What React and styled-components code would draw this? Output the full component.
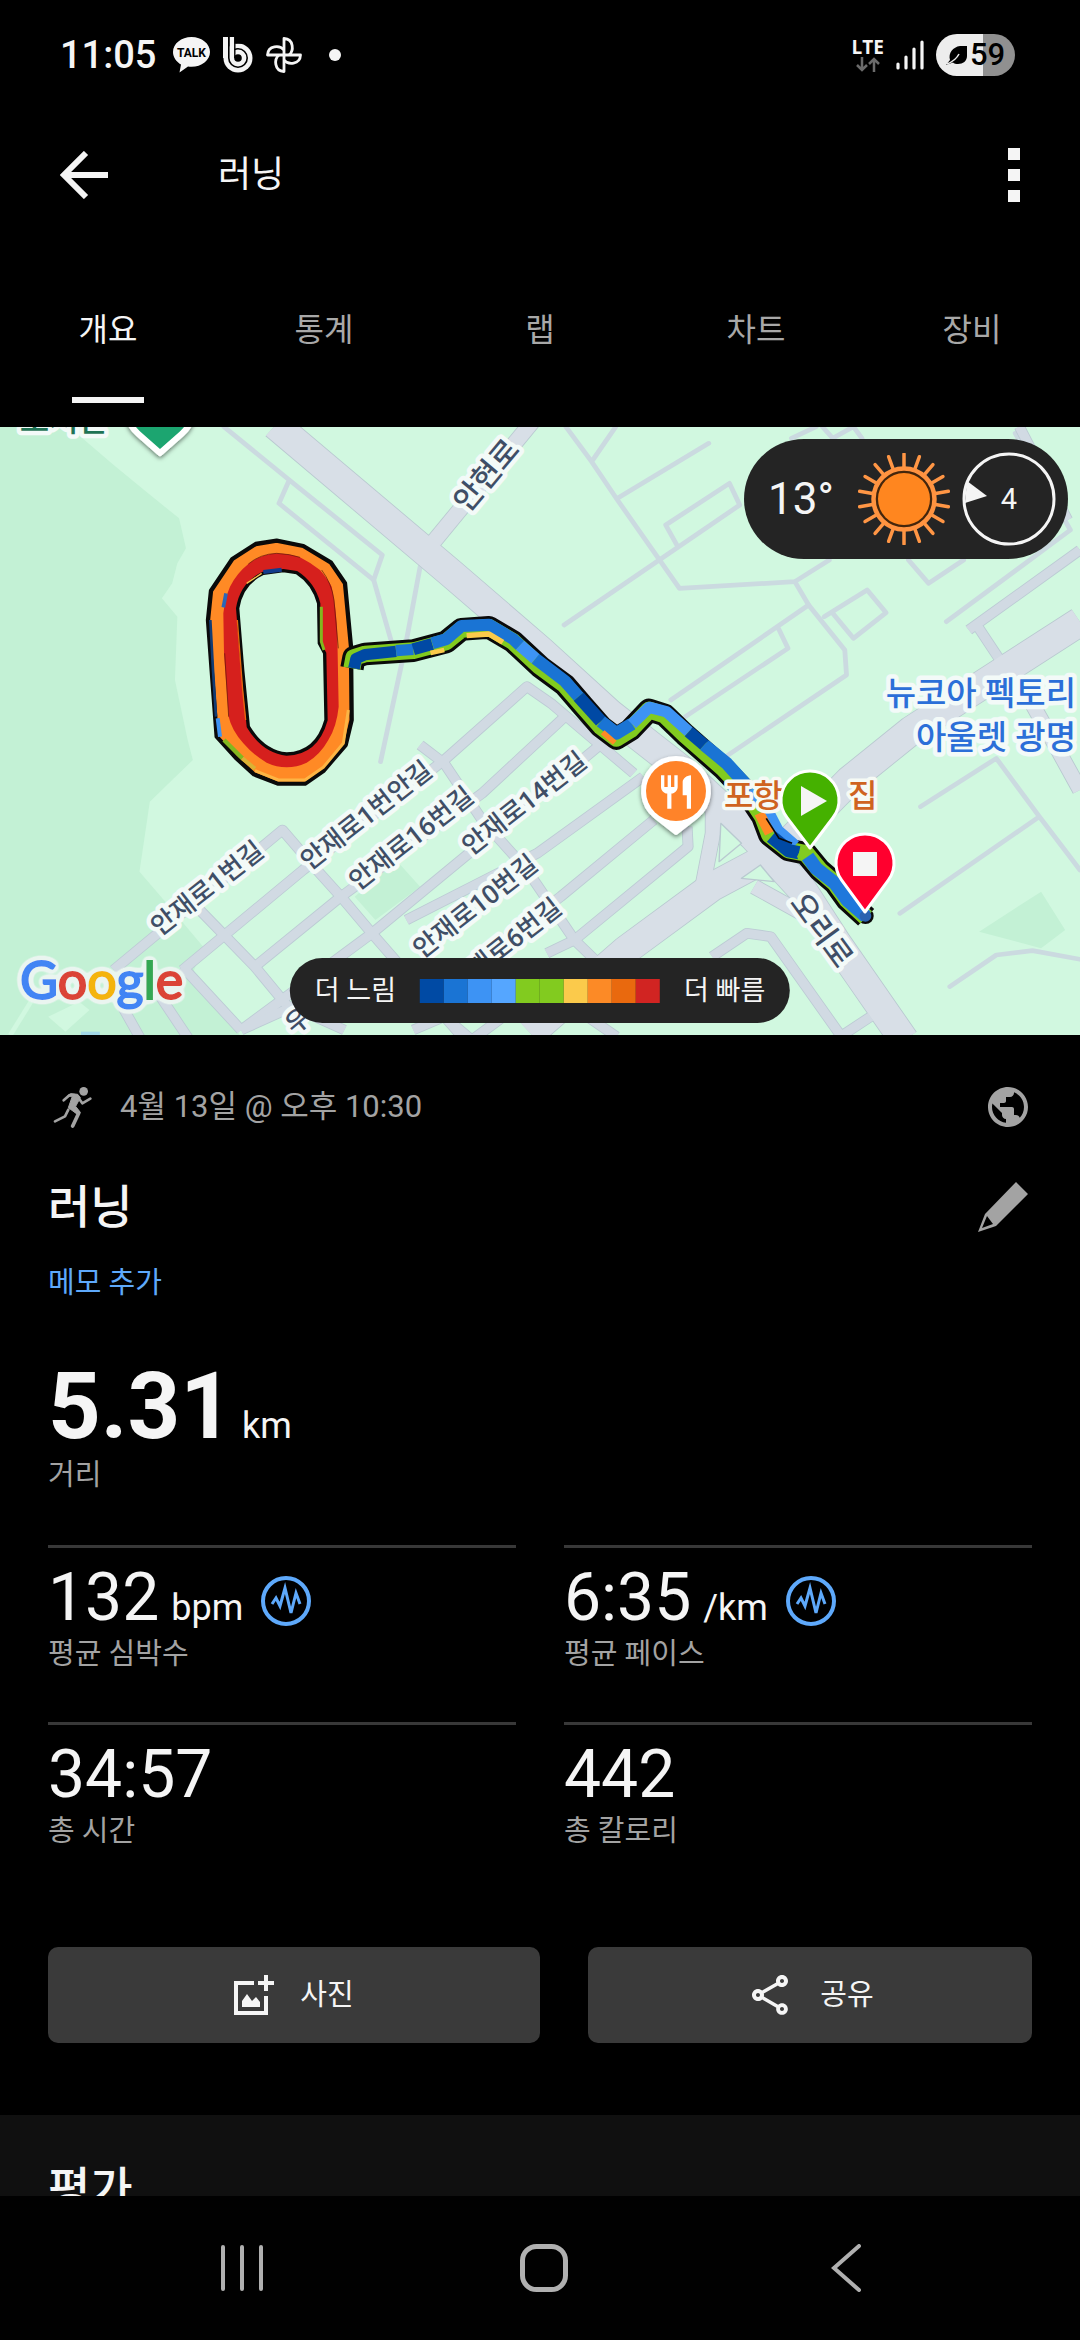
import React from "react";
import styled, { createGlobalStyle } from "styled-components";
import { MdOutlineShare, MdPublic, MdRestaurant } from "react-icons/md";

const GlobalStyle = createGlobalStyle`
  * { box-sizing: border-box; }
  body {
    margin: 0;
    background: #000;
    color: #f5f5f5;
    font-family: Roboto, "Noto Sans CJK KR", sans-serif;
  }
  button {
    border: 0;
    padding: 0;
    background: none;
    color: inherit;
    font: inherit;
    cursor: pointer;
  }
  svg { display: block; }
`;

/* ---------- layout ---------- */

const Screen = styled.div`
  display: flex;
  flex-direction: column;
  height: 100vh;
  overflow: hidden;
`;

const Scroller = styled.main`
  flex: 1;
  min-height: 0;
  overflow: hidden;
`;

/* ---------- status bar ---------- */

const StatusBar = styled.div`
  display: flex;
  justify-content: space-between;
  align-items: center;
  height: 110px;
  padding: 0 65px 0 60px;
`;

const StatusGroup = styled.div`
  display: flex;
  align-items: center;
  gap: ${(p) => p.$gap}px;
`;

const Clock = styled.span`
  font-size: 38px;
  font-weight: 500;
  line-height: 40px;
  margin-right: 4px;
`;

const Dot = styled.span`
  width: 12px;
  height: 12px;
  margin-left: 14px;
  border-radius: 50%;
  background: #f5f5f5;
`;

const Network = styled.div`
  display: flex;
  flex-direction: column;
  align-items: center;
  gap: 2px;
  font-family: "Open Sans", sans-serif;
  font-size: 19px;
  font-weight: 700;
  line-height: 16px;
`;

const Battery = styled.div`
  display: flex;
  align-items: center;
  justify-content: center;
  gap: 3px;
  width: 79px;
  height: 42px;
  border-radius: 21px;
  background: linear-gradient(90deg, #ededed 59%, #909090 59%);
  color: #000;
  font-size: 31px;
  font-weight: 500;
  line-height: 42px;
`;

/* ---------- app bar and tabs ---------- */

const AppBar = styled.header`
  display: flex;
  align-items: center;
  height: 130px;
  padding: 0 60px;
`;

const AppTitle = styled.h1`
  flex: 1;
  margin: 0 0 0 110px;
  font-size: 36px;
  font-weight: 400;
  line-height: 48px;
`;

const Tabs = styled.nav`
  display: grid;
  grid-template-columns: repeat(5, 1fr);
`;

const Tab = styled.button`
  display: flex;
  flex-direction: column;
  align-items: center;
  gap: 47px;
  padding: 70px 0 24px;
  font-size: 32px;
  line-height: 40px;
  color: ${(p) => (p.$active ? "#f5f5f5" : "#a8a8a8")};

  &::after {
    content: "";
    width: 72px;
    height: 6px;
    background: ${(p) => (p.$active ? "#f5f5f5" : "transparent")};
  }
`;

/* ---------- map ---------- */

const MapPanel = styled.section`
  position: relative;
  height: 608px;
  background: #d1f8e0;
  overflow: hidden;
`;

const MapCanvas = styled.svg`
  width: 100%;
  height: 100%;
  font-family: Roboto, "Noto Sans CJK KR", sans-serif;
`;

const Weather = styled.div`
  position: absolute;
  top: 12px;
  right: 12px;
  display: flex;
  align-items: center;
  height: 120px;
  padding: 0 12px 0 24px;
  border-radius: 60px;
  background: #242424;
`;

const Temperature = styled.span`
  margin-right: 24px;
  font-size: 44px;
  line-height: 48px;
`;

const Wind = styled.div`
  display: grid;
  place-items: center;
  margin-left: 12px;
  font-size: 29px;
  line-height: 32px;

  > * { grid-area: 1 / 1; }
`;

const Legend = styled.div`
  position: absolute;
  bottom: 12px;
  left: 50%;
  transform: translateX(-50%);
  display: flex;
  align-items: center;
  gap: 24px;
  height: 65px;
  padding: 0 25px;
  border-radius: 33px;
  background: #242424;
  font-size: 27px;
  line-height: 32px;
  white-space: nowrap;
`;

const Scale = styled.div`
  display: flex;
`;

const Swatch = styled.span`
  width: 24px;
  height: 24px;
  background: ${(p) => p.$color};
`;

/* ---------- activity details ---------- */

const Details = styled.section`
  padding: 48px 48px 72px;
`;

const Row = styled.div`
  display: flex;
  justify-content: space-between;
  align-items: center;
`;

const When = styled.div`
  display: flex;
  align-items: center;
  gap: 28px;
  height: 48px;
  padding-left: 5px;
  color: #a3a3a3;
  font-size: 31px;
  line-height: 40px;
`;

const IconButton = styled.button`
  color: ${(p) => p.$color || "#f5f5f5"};
`;

const Heading = styled.h2`
  margin: 0;
  font-size: 46px;
  font-weight: 500;
  line-height: 56px;
`;

const TitleRow = styled(Row)`
  margin-top: 48px;
  padding-right: 4px;
`;

const NoteLink = styled.a`
  display: block;
  width: fit-content;
  margin-top: 28px;
  color: #5ea9fb;
  font-size: 29px;
  line-height: 40px;
  text-decoration: none;
`;

const Label = styled.dt`
  color: #a3a3a3;
  font-size: 29px;
  line-height: 40px;
`;

const Value = styled.dd`
  display: flex;
  align-items: baseline;
  gap: ${(p) => (p.$large ? 9 : 12)}px;
  height: ${(p) => (p.$large ? 96 : 72)}px;
  margin: 0;
  font-size: ${(p) => (p.$large ? 92 : 66)}px;
  font-weight: ${(p) => (p.$large ? 700 : 400)};
  line-height: ${(p) => (p.$large ? 96 : 72)}px;
`;

const Unit = styled.span`
  font-size: 36px;
  font-weight: 400;
  line-height: 40px;
`;

const Stat = styled.dl`
  display: flex;
  flex-direction: column-reverse;
  margin: 0;
`;

const Distance = styled(Stat)`
  margin-top: 56px;
`;

const StatGrid = styled.div`
  display: grid;
  grid-template-columns: 1fr 1fr;
  gap: 48px;
  margin-top: 50px;

  ${Stat} {
    padding-top: 14px;
    border-top: 3px solid #383838;
  }
`;

const PulseButton = styled.button`
  align-self: center;
  margin: 6px 0 0 6px;
`;

const Actions = styled.div`
  display: grid;
  grid-template-columns: 492fr 444fr;
  gap: 48px;
  margin-top: 96px;
`;

const Action = styled.button`
  display: flex;
  align-items: center;
  justify-content: center;
  gap: 26px;
  height: 96px;
  border-radius: 10px;
  background: #3a3a3a;
  font-size: 29px;
  line-height: 40px;
`;

const Rating = styled.section`
  padding: 46px 48px;
  background: #101010;
`;

const SystemNav = styled.nav`
  display: grid;
  grid-template-columns: repeat(3, 1fr);
  align-items: center;
  height: 144px;
  padding: 0 83px 0 91px;
  background: #010101;
  color: #b0b0b0;

  button {
    display: grid;
    place-items: center;
  }
`;

/* ---------- icons ---------- */

const TalkIcon = () => (
  <svg width="37" height="36" viewBox="0 0 37 36">
    <path d="M18.500 0C8.300 0 0 6.700 0 15c0 5.300 3.300 9.700 8 12.500L6.500 35.500l8.500-6c1.200.2 2.300.3 3.500.3C28.700 29.800 37 23.300 37 15S28.700 0 18.500 0z" fill="#f5f5f5" />
    <text x="18.500" y="20" textAnchor="middle" fontSize="12" fontWeight="700" fill="#000">TALK</text>
  </svg>
);

const BIcon = () => (
  <svg width="30" height="36" viewBox="0 0 30 36">
    <path d="M0 0h5v20H0zM6.500 0h5v12h-5z" fill="#f5f5f5" />
    <circle cx="15" cy="21" r="14.500" fill="#f5f5f5" />
    <path d="M0 8h5v13H0z" fill="#f5f5f5" />
    <path d="M5.800 0v21a9.200 9.200 0 1 0 9.200-9.200c-1.500 0-2.500.3-3.500.8" fill="none" stroke="#000" strokeWidth="1.600" />
    <path d="M11.800 0v21" stroke="#000" strokeWidth="1.400" />
    <circle cx="15" cy="21" r="3.800" fill="#000" />
    <path d="M12.500 0H20v6.600h-7.500z" fill="#000" />
  </svg>
);

const PinwheelIcon = () => (
  <svg width="36" height="36" viewBox="-18 -18 36 36" fill="none" stroke="#f5f5f5" strokeWidth="2.800" strokeLinejoin="round">
    {[0, 90, 180, 270].map((a) => (
      <path key={a} transform={`rotate(${a})`} d="M0 0V-16.500C10-16 10-4 5 0" />
    ))}
  </svg>
);

const DataIcon = () => (
  <svg width="26" height="15" viewBox="0 0 26 15" fill="none" stroke="#6b6b6b" strokeWidth="2.500">
    <path d="M7 0v13M2 8l5 5 5-5M19 15V2M14 7l5-5 5 5" />
  </svg>
);

const SignalIcon = () => (
  <svg width="28" height="30" viewBox="0 0 28 30" stroke="#f5f5f5" strokeWidth="3.200" strokeLinecap="round">
    <path d="M2 24v4M10 17v11M18 9v19M26 2v26" />
  </svg>
);

const LeafIcon = () => (
  <svg width="21" height="21" viewBox="0 0 21 21">
    <path d="M21 1v10c0 5-4 8-9 8-2 0-4-.5-5-1.500L0 20l4-5C2 8 7 2 14 1z" fill="#000" />
    <path d="M1 19C6 17 11 13 13 9" stroke="#ededed" strokeWidth="1.500" fill="none" />
  </svg>
);

const BackArrow = () => (
  <svg width="48" height="48" viewBox="0 0 48 48" fill="none" stroke="currentColor" strokeWidth="6">
    <path d="M48 24H5M26 2L4 24l22 22" />
  </svg>
);

const MoreIcon = () => (
  <svg width="12" height="54" viewBox="0 0 12 54" fill="currentColor">
    <path d="M0 0h12v12H0zM0 21h12v12H0zM0 42h12v12H0z" />
  </svg>
);

const SunIcon = () => (
  <svg width="92" height="92" viewBox="-46 -46 92 92">
    {Array.from({ length: 18 }, (_, i) => (
      <path key={i} transform={`rotate(${i * 20})`} d="M0-32V-45" stroke="#ff9645" strokeWidth="3.500" strokeLinecap="round" />
    ))}
    <circle r="30.500" fill="#44260c" stroke="#ff9340" strokeWidth="4.500" />
    <circle r="26" fill="#ff861f" />
  </svg>
);

const WindDial = () => (
  <svg width="94" height="94" viewBox="-47 -47 94 94">
    <circle r="45" fill="none" stroke="#f5f5f5" strokeWidth="3" />
    <path d="M-42-18L-22-3l-22 7z" fill="#f5f5f5" />
  </svg>
);

const RunnerIcon = () => (
  <svg width="39" height="42" viewBox="40 33 117 126" fill="none" stroke="currentColor" strokeLinejoin="round" strokeLinecap="round">
    <circle cx="132" cy="49" r="13" fill="currentColor" stroke="none" />
    <path d="M94 56l20 2 8 10-14 26 14 18-6 8-30-22 12-34-14 0z" fill="currentColor" strokeWidth="3" />
    <path d="M72 76l18-16h14" strokeWidth="8" />
    <path d="M116 68l12 17 24-14" strokeWidth="8" />
    <path d="M98 98l19 17-18 38" strokeWidth="11" />
    <path d="M86 104l-10 20-30 15" strokeWidth="8" />
  </svg>
);

const PencilIcon = () => (
  <svg width="50" height="50" viewBox="0 0 50 50" fill="currentColor">
    <path fillRule="evenodd" d="M38 0l12 12-32 32L0 50l7-18zM9 34L4 46l11-4z" />
  </svg>
);

const PulseIcon = () => (
  <svg width="50" height="50" viewBox="-25 -25 50 50" fill="none" stroke="#5ea9fb">
    <circle r="23" strokeWidth="4" />
    <path d="M-14 3l4-6 4 8 5-18 6 25 5-20 4 11" strokeWidth="3" />
  </svg>
);

const AddPhotoIcon = () => (
  <svg width="40" height="40" viewBox="0 0 40 40">
    <path d="M20 8H2v30h30V21M32 0v16M24 8h16" fill="none" stroke="currentColor" strokeWidth="4" />
    <path d="M8 32V26l5-7 5 7 4-4 4 5v5z" fill="currentColor" />
  </svg>
);

/* ---------- map drawing ---------- */

const MINOR = [
  "M650 20L840 180L1110 405L1085 480L810 250L840 180",
  "M1085 480L1135 660M1220 440L1175 690L1105 1025",
  "M1643 20L1718 125L1793 240L1973 505L2308 485L2408 420M1788 20L1718 125M2058 70L1793 235",
  "M1968 380L1933 315L2118 190L2148 255L1638 615",
  "M2308 485L2348 555L2453 690L2458 765L2100 1015",
  "M2348 555L1948 840M2258 620L2288 685L1990 890",
  "M2393 590L2518 510L2573 578L2478 655L2418 580",
  "M2638 420L2696 490L2798 420M2298 55L2370 20M2388 20L2418 55L2478 20L2503 55",
  "M2673 1160L2893 1015L3018 1190L3136 1350M3018 1190L2613 1480",
  "M2758 1700L2893 1605L2998 1592L3136 1618M2748 605L3108 330L2948 40",
];

const STREETS = [
  "M330 1650L820 1230L920 1350L990 1430L1080 1540L1350 1860",
  "M1220 975L1290 1030L1400 1200L1530 1350L1668 1560L1728 1620",
  "M530 1650L880 1350L1290 1020L1530 800L1600 850L1760 990L1840 1060",
  "M740 1640L990 1430L1400 1120L1640 890",
  "M700 1830L1080 1540L1350 1310L1748 970",
  "M580 1470L740 1640L860 1790M350 1750L410 1860M440 1690L550 1860M530 1640L700 1830",
  "M1180 1500L1560 1300L1868 1070M1360 1640L1628 1430L1898 1200",
  "M1588 1600L1668 1560L1998 1280L1995 1220M700 1830L850 1760L1000 1830",
  "M2068 1610L2168 1540L2238 1550L2440 1845M2528 1790L2440 1850M1200 1830L1290 1790L1370 1860L1580 1700L1790 1850",
  "M2813 630L3136 390M2833 610L2913 735M2960 20L3100 300",
];

const AVENUES = [
  { d: "M1255 370L1550 0", w: 44 },
  { d: "M800 15L1310 460L1568 690L1770 880L1968 1040L2188 1250L2330 1410L2430 1570L2625 1860", w: 84 },
  { d: "M1540 1840L1818 1590L2068 1400L2268 1290L2468 1080L2648 930L3136 605", w: 84 },
  { d: "M2070 1100L2070 1240L2040 1400", w: 42 },
  { d: "M2958 780L3040 930L3136 1110", w: 42 },
  { d: "M2190 1400L2330 1480L2350 1290", w: 42 },
];

const ROUTE =
  "M1022 745L1028 712L1060 702L1200 692L1295 666L1340 628L1420 622L1490 665L1568 740L1640 795L1690 855L1745 920L1790 955L1830 930L1885 870L1930 885L1990 945L2100 1045L2170 1120L2215 1190L2235 1245L2290 1290L2340 1300L2380 1350L2425 1390L2460 1440L2515 1492";

const ROUTE_PARTS = [
  ["M1028 745L1034 716L1060 704L1150 694", "#0049a4", 34],
  ["M1150 692L1200 688", "#1a74d4", 34],
  ["M1200 688L1255 672", "#0049a4", 36],
  ["M1255 670L1295 658L1340 618L1420 614L1490 657L1510 676", "#1a74d4", 36],
  ["M1510 676L1555 716", "#3d93f4", 36],
  ["M1555 716L1640 783L1680 830", "#1a74d4", 36],
  ["M1680 830L1745 904", "#0049a4", 38],
  ["M1745 904L1790 940L1835 912", "#1a74d4", 38],
  ["M1835 912L1885 862L1935 875L2000 935", "#3d93f4", 34],
  ["M2000 935L2045 975", "#0049a4", 36],
  ["M2045 975L2110 1030L2180 1110", "#1a74d4", 38],
  ["M2180 1110L2235 1180L2260 1230L2310 1275", "#3d93f4", 30],
  ["M2240 1250L2290 1292L2320 1298", "#0049a4", 40],
  ["M2205 1180L2235 1240", "#ff8a25", 30],
  ["M2320 1298L2345 1310", "#82cb1f", 30],
  ["M2345 1310L2370 1345L2425 1390L2460 1440L2515 1490", "#1f78dc", 40],
  ["M1250 699L1290 690", "#fbca4b", 14],
  ["M1355 647L1420 642L1460 667", "#fbca4b", 16],
  ["M1750 937L1785 968", "#ff8a25", 16],
];

const STREET_LABELS = [
  ["안재로1번길", 207, 888, -38, 26],
  ["안재로1번안길", 366, 815, -38, 26],
  ["안재로16번길", 411, 838, -38, 26],
  ["안재로14번길", 524, 803, -38, 26],
  ["안재로10번길", 475, 906, -38, 26],
  ["안재로6번길", 505, 945, -38, 26],
  ["우체국", 316, 1005, -40, 26],
  ["안현로", 486, 475, -50, 30],
  ["오리로", 822, 930, 54, 30],
];

function Marker({ x, y, r, drop, fill, edge = "#fff", edgeWidth = 3, children }) {
  const cos = r / drop;
  const sin = Math.sqrt(1 - cos * cos);
  const d = `M${x} ${y + drop}L${x - r * sin} ${y + r * cos}A${r} ${r} 0 1 1 ${x + r * sin} ${y + r * cos}Z`;
  return (
    <g>
      <path d={d} fill={fill} stroke={edge} strokeWidth={edgeWidth} strokeLinejoin="round" />
      {children}
    </g>
  );
}

const TrackLoop = () => (
  <g transform="translate(180 520) scale(.33333)" strokeLinejoin="round" fill="none">
    <path d="M290 62L370 78L452 127L495 190L513 380L515 600L497 675L430 753L375 791L295 791L222 763L167 713L110 650L95 450L84 300L93 212L157 117L227 72Z" fill="#ff8a25" stroke="#0a0a0a" strokeWidth="13" />
    <path d="M91 300L99 450L108 590" stroke="#123c74" strokeWidth="8" />
    <path d="M113 595L120 650" stroke="#3d93f4" strokeWidth="12" />
    <path d="M132 660L187 715" stroke="#82b81f" strokeWidth="13" />
    <path d="M187 715L225 746" stroke="#d9b235" strokeWidth="12" />
    <path d="M225 752L295 780L375 780L430 742L490 670L505 570" stroke="#fdb544" strokeWidth="9" />
    <path d="M290 100Q330 102 360 112Q395 130 420 150Q445 180 455 200Q470 270 472 350L476 560Q470 620 445 660Q420 705 380 728Q350 742 320 742Q290 742 260 728Q220 705 190 670Q155 630 146 590L132 400L130 280Q135 235 150 200Q170 160 205 132Q240 104 290 100Z" fill="#d6201d" />
    <path d="M205 132Q240 102 290 100Q330 102 360 112M425 150Q455 190 462 240L475 385M134 400L146 590" stroke="#5a1408" strokeWidth="2" />
    <path d="M310 152L350 158Q400 190 416 250L418 370L434 400L438 600Q410 700 320 702Q250 695 205 620L188 450L173 265Q185 190 250 160Z" fill="#d1f8e0" stroke="#0a0a0a" strokeWidth="10" />
    <path d="M172 300L188 510L197 600" stroke="#e9690e" strokeWidth="4" />
    <path d="M424 260L424 365L432 390" stroke="#82b81f" strokeWidth="9" />
    <path d="M250 156L305 149" stroke="#123c8c" strokeWidth="12" />
    <path d="M200 190L245 160" stroke="#fdc04b" strokeWidth="4" />
    <path d="M138 220L130 262" stroke="#2b67b8" strokeWidth="11" />
  </g>
);

const RouteMap = () => (
  <MapCanvas viewBox="0 427 1080 608" preserveAspectRatio="xMidYMid slice" role="img" aria-label="러닝 경로 지도">
    <defs>
      <filter id="halo" x="-20%" y="-20%" width="140%" height="150%">
        <feGaussianBlur in="SourceAlpha" stdDeviation="3" />
        <feComponentTransfer result="shape"><feFuncA type="linear" slope="14" intercept="-0.6" /></feComponentTransfer>
        <feFlood floodColor="#eaf5f0" />
        <feComposite in2="shape" operator="in" />
        <feMerge><feMergeNode /><feMergeNode in="SourceGraphic" /></feMerge>
      </filter>
      <filter id="shade" x="-30%" y="-30%" width="160%" height="160%">
        <feDropShadow dx="0" dy="2" stdDeviation="2" floodOpacity=".5" />
      </filter>
    </defs>

    <rect y="427" width="1080" height="608" fill="#d1f8e0" />
    <g transform="translate(0 420) scale(.34439 .33333)" fill="none" strokeLinejoin="round">
      <path fill="#c3f1d5" d="M0 20L200 20L330 135L430 220L520 295L540 385L515 430L500 490L470 535L515 590L508 780L545 960L560 1020L505 1075L435 1145L405 1355L480 1445L590 1580L560 1660L700 1850L0 1850Z" />
      <path fill="#c3f1d5" d="M1150 1320L1220 1400L1090 1500L1030 1430ZM2843 1535L3023 1415L3093 1530L3023 1585Z" />
      <path fill="#d1f8e0" d="M140 1790L230 1745L260 1770L190 1835Z" />
      <path d="M30 1845L90 1745" stroke="#d1f8e0" strokeWidth="14" />
      <path fill="#a3d9e8" d="M235 1835h55v15h-55z" />
      {MINOR.map((d) => <path key={d} d={d} stroke="#cbdae0" strokeWidth="14" strokeLinecap="round" />)}
      {STREETS.map((d) => <path key={d} d={d} stroke="#bccbd4" strokeWidth="32" />)}
      {AVENUES.map(({ d, w }) => <path key={d} d={d} stroke="#b9c9d0" strokeWidth={w + 5} />)}
      {STREETS.map((d) => <path key={d} d={d} stroke="#d1dae3" strokeWidth="27" />)}
      {AVENUES.map(({ d, w }) => <path key={d} d={d} stroke="#d8dfe7" strokeWidth={w} />)}
      <path d="M2093 1210L2153 1270L2088 1325ZM2153 1375L2208 1335L2248 1385Z" fill="#d1f8e0" stroke="#b9c9d0" strokeWidth="4" />
    </g>

    <g fill="#3f4e66" stroke="#f3faf8" strokeWidth="9" strokeLinejoin="round" paintOrder="stroke" fontWeight="500" textAnchor="middle">
      {STREET_LABELS.map(([text, x, y, angle, size]) => (
        <text key={text} transform={`translate(${x} ${y}) rotate(${angle})`} dy=".36em" fontSize={size}>{text}</text>
      ))}
      <g fill="#2b6fd8" fontSize="33" textAnchor="end">
        <text x="1076" y="705">뉴코아 펙토리</text>
        <text x="1076" y="749">아울렛 광명</text>
      </g>
      <text x="108" y="431" fill="#1f7355" fontSize="32" textAnchor="end">도서관</text>
    </g>

    <g filter="url(#shade)">
      <Marker x={160} y={409} r={33} drop={44} fill="#1aa56f" edge="#fff" edgeWidth={6} />
    </g>

    <TrackLoop />
    <g transform="translate(0 420) scale(.34439 .33333)" fill="none" strokeLinejoin="round">
      <path d={ROUTE} stroke="#0a0a0a" strokeWidth="68" />
      <circle cx="2513" cy="1488" r="24" fill="#0a0a0a" />
      <path d={ROUTE} stroke="#82cb1f" strokeWidth="50" />
      {ROUTE_PARTS.map(([d, color, w]) => <path key={d} d={d} stroke={color} strokeWidth={w} />)}
      <path d="M2225 1195L2262 1255L2300 1270" stroke="#0a0a0a" strokeWidth="5" />
      <circle cx="2513" cy="1488" r="17" fill="#2a62b0" />
    </g>

    <g fill="#cf6320" stroke="#f6faf5" strokeWidth="7" strokeLinejoin="round" paintOrder="stroke" fontWeight="500" fontSize="32">
      <text x="724" y="807">포항</text>
      <text x="848" y="807">집</text>
    </g>

    <g filter="url(#shade)">
      <Marker x={676} y={791} r={33} drop={42} fill="#fff" edgeWidth={4} />
    </g>
    <circle cx="676" cy="791" r="30" fill="#ff8329" />
    <MdRestaurant x={656} y={772} size={40} color="#fff" />
    <Marker x={810} y={800} r={29} drop={48} fill="#45b100">
      <path d="M801 786l26 15l-26 15z" fill="#f5f5f5" />
    </Marker>
    <Marker x={865} y={863} r={29} drop={49} fill="#ff002e">
      <path d="M853 852h24v24h-24z" fill="#f5f5f5" />
    </Marker>

    <text x="20" y="999" fontFamily="Lato, sans-serif" fontSize="52" strokeWidth="2" filter="url(#halo)">
      <tspan fill="#4285f4" stroke="#4285f4">G</tspan>
      <tspan fill="#db4437" stroke="#db4437">o</tspan>
      <tspan fill="#f4b40d" stroke="#f4b40d">o</tspan>
      <tspan fill="#4285f4" stroke="#4285f4">g</tspan>
      <tspan fill="#34a853" stroke="#34a853">l</tspan>
      <tspan fill="#db4437" stroke="#db4437">e</tspan>
    </text>
  </MapCanvas>
);

/* ---------- page ---------- */

const TABS = ["개요", "통계", "랩", "차트", "장비"];

const PACE_COLORS = [
  "#004aa4", "#1a74d4", "#3d93f4", "#55a6ff", "#82cb1f",
  "#82cb1f", "#fbca4b", "#fc8a26", "#e9690e", "#d12422",
];

const STATS = [
  { label: "평균 심박수", value: "132", unit: "bpm", chart: true },
  { label: "평균 페이스", value: "6:35", unit: "/km", chart: true },
  { label: "총 시간", value: "34:57" },
  { label: "총 칼로리", value: "442" },
];

export default function App() {
  return (
    <Screen>
      <GlobalStyle />
      <StatusBar>
        <StatusGroup $gap={13}>
          <Clock>11:05</Clock>
          <TalkIcon />
          <BIcon />
          <PinwheelIcon />
          <Dot />
        </StatusGroup>
        <StatusGroup $gap={12}>
          <Network>
            LTE
            <DataIcon />
          </Network>
          <SignalIcon />
          <Battery>
            <LeafIcon />
            59
          </Battery>
        </StatusGroup>
      </StatusBar>

      <AppBar>
        <IconButton aria-label="뒤로"><BackArrow /></IconButton>
        <AppTitle>러닝</AppTitle>
        <IconButton aria-label="더보기"><MoreIcon /></IconButton>
      </AppBar>

      <Tabs>
        {TABS.map((name, i) => (
          <Tab key={name} $active={i === 0}>{name}</Tab>
        ))}
      </Tabs>

      <Scroller>
        <MapPanel>
          <RouteMap />
          <Weather>
            <Temperature>13°</Temperature>
            <SunIcon />
            <Wind>
              <WindDial />
              <span>4</span>
            </Wind>
          </Weather>
          <Legend>
            <span>더 느림</span>
            <Scale>
              {PACE_COLORS.map((color, i) => <Swatch key={i} $color={color} />)}
            </Scale>
            <span>더 빠름</span>
          </Legend>
        </MapPanel>

        <Details>
          <Row>
            <When>
              <RunnerIcon />
              <span>4월 13일 @ 오후 10:30</span>
            </When>
            <IconButton aria-label="공개 범위" $color="#a3a3a3"><MdPublic size={48} /></IconButton>
          </Row>
          <TitleRow>
            <Heading>러닝</Heading>
            <IconButton aria-label="이름 편집" $color="#a3a3a3"><PencilIcon /></IconButton>
          </TitleRow>
          <NoteLink href="#note">메모 추가</NoteLink>

          <Distance>
            <Label>거리</Label>
            <Value $large>5.31<Unit>km</Unit></Value>
          </Distance>

          <StatGrid>
            {STATS.map(({ label, value, unit, chart }) => (
              <Stat key={label}>
                <Label>{label}</Label>
                <Value>
                  {value}
                  {unit && <Unit>{unit}</Unit>}
                  {chart && <PulseButton aria-label={`${label} 차트`}><PulseIcon /></PulseButton>}
                </Value>
              </Stat>
            ))}
          </StatGrid>

          <Actions>
            <Action><AddPhotoIcon />사진</Action>
            <Action><MdOutlineShare size={48} />공유</Action>
          </Actions>
        </Details>

        <Rating>
          <Heading>평가</Heading>
        </Rating>
      </Scroller>

      <SystemNav>
        <button aria-label="최근 앱">
          <svg width="42" height="48" viewBox="0 0 42 48" stroke="currentColor" strokeWidth="4" strokeLinecap="round">
            <path d="M2 3v42M21 3v42M40 3v42" />
          </svg>
        </button>
        <button aria-label="홈">
          <svg width="48" height="48" viewBox="0 0 48 48" fill="none" stroke="currentColor" strokeWidth="5">
            <rect x="2.500" y="2.500" width="43" height="43" rx="14" />
          </svg>
        </button>
        <button aria-label="뒤로 가기">
          <svg width="30" height="48" viewBox="0 0 30 48" fill="none" stroke="currentColor" strokeWidth="4" strokeLinecap="round">
            <path d="M28 2L3 24l25 22" />
          </svg>
        </button>
      </SystemNav>
    </Screen>
  );
}
